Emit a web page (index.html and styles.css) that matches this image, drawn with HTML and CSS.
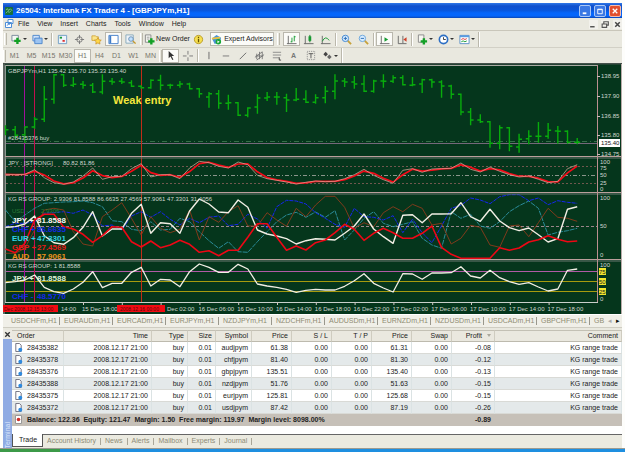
FILE: index.html
```html
<!DOCTYPE html>
<html lang="en">
<head>
<meta charset="utf-8">
<title>Interbank FX Trader 4</title>
<link rel="stylesheet" href="styles.css">
</head>
<body>
<div class="window">
  <header class="titlebar">
    <svg class="app-icon" viewBox="0 0 9 9"><rect width="9" height="9" rx="1" fill="#17703c"/><path d="M1 3l2-1 1 2 2-2 2 2M1 7l2-2 2 1 2-2" fill="none" stroke="#7fc494"/></svg>
    <h1>26504: Interbank FX Trader 4 - [GBPJPYm,H1]</h1>
    <div class="window-buttons">
      <button aria-label="Minimize"><svg viewBox="0 0 11 11"><path d="M3 8h4" stroke="#fff" stroke-width="2"/></svg></button>
      <button aria-label="Maximize"><svg viewBox="0 0 11 11"><path d="M3 3.5h5v5H3zM3 4h5" stroke="#fff" fill="none"/></svg></button>
      <button class="close" aria-label="Close"><svg viewBox="0 0 11 11"><path d="M3 3l5 5M8 3L3 8" stroke="#fff" stroke-width="1.4"/></svg></button>
    </div>
  </header>

  <nav class="menubar">
    <svg class="doc-icon" viewBox="0 0 10 10"><path d="M3 .5h5v4H3zM.5 3.5h6v5h-6z" fill="#fff" stroke="#4e8fd8"/><path d="M2 7l1-2 1 1 1-1" stroke="#4e8fd8" fill="none" stroke-width=".7"/></svg>
    <button>File</button><button>View</button><button>Insert</button><button>Charts</button><button>Tools</button><button>Window</button><button>Help</button>
    <div class="child-buttons">
      <button aria-label="Minimize chart"><svg viewBox="0 0 8 8"><path d="M1 6h4" stroke="#555" stroke-width="1.3"/></svg></button>
      <button aria-label="Restore chart"><svg viewBox="0 0 8 8"><path d="M2.500 3V1.500h4v3H5M1 3.500h4v3H1z" stroke="#555" fill="none"/></svg></button>
      <button aria-label="Close chart"><svg viewBox="0 0 8 8"><path d="M2 2l4 4M6 2L2 6" stroke="#444" stroke-width="1.3"/></svg></button>
    </div>
  </nav>

  <div class="toolbar main">
    <i class="grip"></i>
    <button class="drop" aria-label="New chart"><svg viewBox="0 0 12 12"><path d="M1 1.500h7v6H1z" fill="#f4f8f4" stroke="#789"/><path d="M7 4v7M3.500 7.500h7" stroke="#12a025" stroke-width="2.600"/></svg></button>
    <button class="drop" aria-label="Profiles"><svg viewBox="0 0 12 12"><path d="M1 1.500h7v6H1z" fill="#cfe2fa" stroke="#4a86cc"/><path d="M3 4.500h8v6H3z" fill="#9cc4f2" stroke="#4a86cc"/></svg></button>
    <i class="sep"></i>
    <button aria-label="Market Watch"><svg viewBox="0 0 12 12"><path d="M1.500 1.500h9v9h-9z" fill="#eef4fb" stroke="#6f9cc4"/><path d="M3 4h2.500" stroke="#1a9a35" stroke-width="2"/><path d="M6 7.500h2.500" stroke="#d33" stroke-width="2"/></svg></button>
    <button aria-label="Data Window"><svg viewBox="0 0 12 12"><circle cx="6" cy="6" r="3" fill="none" stroke="#777"/><path d="M6 1v4M6 7v4M1 6h4M7 6h4" stroke="#777"/></svg></button>
    <button aria-label="Navigator"><svg viewBox="0 0 12 12"><path d="M1 2h4l1 1h2v4H1z" fill="#fbe58a" stroke="#c99b2a" stroke-width=".8"/><path d="M7.500 4l1.200 2.300 2.500.4-1.800 1.800.4 2.500-2.300-1.200L5.200 11l.4-2.500-1.800-1.800 2.500-.4z" fill="#ffd84a" stroke="#c48a1a" stroke-width=".7"/></svg></button>
    <button class="pressed" aria-label="Terminal"><svg viewBox="0 0 12 12"><path d="M1 1.500h10v9H1z" fill="#fff" stroke="#3f7cc8"/><path d="M2.500 2v8" stroke="#3f7cc8" stroke-width="2"/></svg></button>
    <button aria-label="Strategy Tester"><svg viewBox="0 0 12 12"><path d="M1 1h8v9H1z" fill="#eef3f8" stroke="#8ab"/><circle cx="6.500" cy="5.500" r="2.500" fill="#bfe0ff" stroke="#6a8fb4"/><path d="M8.500 7.500l3 3" stroke="#c59a2c" stroke-width="1.500"/></svg></button>
    <i class="grip"></i>
    <button class="labelled"><svg viewBox="0 0 12 12"><path d="M1.500 1h6v8h-6z" fill="#f8f8f4" stroke="#888"/><path d="M3 3.500h3M3 5.500h3" stroke="#999"/><path d="M8 4.500v7M4.500 8h7" stroke="#12a025" stroke-width="2.600"/></svg>New Order</button>
    <button aria-label="Information"><svg viewBox="0 0 12 12"><circle cx="6" cy="6" r="4.500" fill="#f6df4e" stroke="#b99a25"/><path d="M6 3v1.500M6 5.500V9" stroke="#665200" stroke-width="1.400"/></svg></button>
    <button class="labelled pressed expert"><svg viewBox="0 0 12 12"><path d="M1 5l5-4 5 3-1 5-6 2z" fill="#4c93d6"/><path d="M1 5l9-1" stroke="#ecc43e" stroke-width="2"/><circle cx="8" cy="8.500" r="3" fill="#19a636"/><path d="M7 7l2.500 1.500L7 10z" fill="#fff"/></svg>Expert Advisors</button>
    <i class="grip wide"></i>
    <button class="pressed" aria-label="Bar chart"><svg viewBox="0 0 12 12"><path d="M2.500 2v8.500h9M1 10.500h2" stroke="#666" fill="none"/><path d="M6.500 4v5M5 8.500h1.500M9 2v6M9 3h1.500" stroke="#159a30" fill="none"/></svg></button>
    <button aria-label="Candlesticks"><svg viewBox="0 0 12 12"><path d="M2.500 2v8.500h9M1 10.500h2" stroke="#666" fill="none"/><path d="M7.500 1v8" stroke="#117022"/><path d="M6 2.500h3v5H6z" fill="#159a30"/></svg></button>
    <button aria-label="Line chart"><svg viewBox="0 0 12 12"><path d="M2.500 2v8.500h9M1 10.500h2" stroke="#666" fill="none"/><path d="M2.500 8Q6 1 10 7" stroke="#159a30" fill="none"/></svg></button>
    <i class="sep"></i>
    <button aria-label="Zoom in"><svg viewBox="0 0 12 12"><path d="M7 7l4 4" stroke="#c7a13a" stroke-width="2"/><circle cx="4.800" cy="4.800" r="3.500" fill="#d6ebff" stroke="#3f86cf"/><path d="M3 4.800h3.600M4.800 3v3.600" stroke="#276bb5"/></svg></button>
    <button aria-label="Zoom out"><svg viewBox="0 0 12 12"><path d="M7 7l4 4" stroke="#c7a13a" stroke-width="2"/><circle cx="4.800" cy="4.800" r="3.500" fill="#d6ebff" stroke="#6aa5dc"/><path d="M3 4.800h3.600" stroke="#276bb5"/></svg></button>
    <i class="sep"></i>
    <button class="pressed" aria-label="Auto scroll"><svg viewBox="0 0 12 12"><path d="M2.500 2v8.500h9M1 10.500h2" stroke="#666" fill="none"/><path d="M6 3.500l4 2.500-4 2.500z" fill="#159a30"/></svg></button>
    <button aria-label="Chart shift"><svg viewBox="0 0 12 12"><path d="M2.500 2v8.500h9M7.500 2v8" stroke="#666" fill="none"/><path d="M11.500 3.500v5L8 6z" fill="#d0402a"/></svg></button>
    <i class="sep"></i>
    <button class="drop" aria-label="Indicators"><svg viewBox="0 0 12 12"><path d="M1.500 1h6v8h-6z" fill="#f6f6f0" stroke="#888"/><path d="M7.500 4.500v7M4 8h7" stroke="#12a025" stroke-width="2.600"/></svg></button>
    <button class="drop" aria-label="Periods"><svg viewBox="0 0 12 12"><circle cx="6" cy="6" r="4.500" fill="#fff" stroke="#2d6fc4" stroke-width="1.800"/><path d="M6 3.500V6h2.500" stroke="#333" fill="none"/></svg></button>
    <button class="drop" aria-label="Templates"><svg viewBox="0 0 12 12"><path d="M1 1.500h10v9H1z" fill="#fff" stroke="#5a8fc8"/><path d="M1 2.500h10" stroke="#5a9be0" stroke-width="2"/><path d="M2.500 6l2-1 2 1 2-1" stroke="#d33" fill="none"/><path d="M2.500 8.500l2-1 2 1 2-1" stroke="#159a30" fill="none"/></svg></button>
    <i class="sep end"></i>
  </div>

  <div class="toolbar periods">
    <i class="grip"></i>
    <button>M1</button><button>M5</button><button>M15</button><button>M30</button><button class="pressed">H1</button><button>H4</button><button>D1</button><button>W1</button><button>MN</button>
    <i class="grip"></i>
    <button class="pressed" aria-label="Cursor"><svg viewBox="0 0 12 12"><path d="M4 1v8l2-2 2 4 1.200-.6-2-3.800H10z" fill="#333"/></svg></button>
    <button aria-label="Crosshair"><svg viewBox="0 0 12 12"><path d="M6.500 1v4M6.500 8v4M1 6.500h4M8 6.500h4" stroke="#777"/></svg></button>
    <i class="sep"></i>
    <button aria-label="Vertical line"><svg viewBox="0 0 12 12"><path d="M6.500 2v8" stroke="#666"/></svg></button>
    <button aria-label="Horizontal line"><svg viewBox="0 0 12 12"><path d="M3 6.500h7" stroke="#777"/></svg></button>
    <button aria-label="Trendline"><svg viewBox="0 0 12 12"><path d="M3 10l7-7" stroke="#666"/></svg></button>
    <button aria-label="Channel"><svg viewBox="0 0 12 12"><path d="M1 8l8-6M3 11l8-6M3 4v6M6 2v8M9 2v8M2 6.500h8" stroke="#777" fill="none"/></svg></button>
    <button aria-label="Fibonacci"><svg viewBox="0 0 12 12"><path d="M2 2.500h9M2 5.500h9M2 8.500h7" stroke="#888"/><path d="M9 8v3h2" stroke="#444" fill="none"/></svg></button>
    <button class="letter">A</button>
    <button aria-label="Text label"><svg viewBox="0 0 12 12"><path d="M2.500 1.500h8v9h-8z" fill="none" stroke="#888" stroke-dasharray="1 1"/><path d="M4 4h5M6.500 4v5" stroke="#555"/></svg></button>
    <button class="drop" aria-label="Arrows"><svg viewBox="0 0 12 12"><path d="M4 2l2.500 2.500L4 7 1.500 4.500z" fill="#444"/><path d="M8 5l2.500 2.500L8 10 5.500 7.500z" fill="#666"/></svg></button>
    <i class="sep end"></i>
  </div>

  <main class="chart"><svg id="chart" viewBox="3 63 619 251" role="img" aria-label="GBPJPYm H1 chart"></svg></main>

  <nav class="chart-tabs">
    <a href="#">USDCHFm,H1</a><a href="#">EURAUDm,H1</a><a href="#">EURCADm,H1</a><a href="#">EURJPYm,H1</a><a href="#">NZDJPYm,H1</a><a href="#">NZDCHFm,H1</a><a href="#">AUDUSDm,H1</a><a href="#">EURNZDm,H1</a><a href="#">NZDUSDm,H1</a><a href="#">USDCADm,H1</a><a href="#">GBPCHFm,H1</a><a href="#">GB</a>
    <span class="scrollers"><button class="off" aria-label="Scroll left">◂</button><button aria-label="Scroll right">▸</button></span>
  </nav>

  <section class="terminal">
    <aside class="side"><button aria-label="Close terminal"><svg viewBox="0 0 8 8"><path d="M2 2l4 4M6 2L2 6" stroke="#333" stroke-width="1.200"/></svg></button><span>Terminal</span></aside>
    <div class="panel">
      <table>
        <colgroup><col class="c-order"><col class="c-time"><col class="c-type"><col class="c-size"><col class="c-type"><col class="c-num"><col class="c-num"><col class="c-num"><col class="c-num"><col class="c-num"><col class="c-profit"><col></colgroup>
        <thead><tr><th>Order</th><th>Time</th><th>Type</th><th>Size</th><th>Symbol</th><th>Price</th><th>S / L</th><th>T / P</th><th>Price</th><th>Swap</th><th class="sorted">Profit</th><th>Comment</th></tr></thead>
        <tbody id="orders"></tbody>
        <tfoot><tr><td colspan="10"><svg viewBox="0 0 9 9"><path d="M1.500.5h6v8h-6z" fill="#fff" stroke="#999"/><circle cx="4.500" cy="4.500" r="1.800" fill="#d0302a"/></svg>Balance: 122.36&nbsp; Equity: 121.47&nbsp; Margin: 1.50&nbsp; Free margin: 119.97&nbsp; Margin level: 8098.00%</td><td>-0.89</td><td></td></tr></tfoot>
      </table>
      <nav class="terminal-tabs"><a class="active" href="#">Trade</a><a href="#">Account History</a><a href="#">News</a><a href="#">Alerts</a><a href="#">Mailbox</a><a href="#">Experts</a><a href="#">Journal</a></nav>
    </div>
  </section>
</div>
<div class="taskbar"><i></i></div>
<script src="script.js"></script>
</body>
</html>
```
FILE: styles.css
```css
* { box-sizing: border-box; }
body {
  margin: 0;
  padding-top: 3px;
  background: #fdfdfb;
  color: #222;
  font: 7px/10px "Liberation Sans", Arial, sans-serif;
}
button { margin: 0; padding: 0; border: 0; background: none; font: inherit; color: inherit; }
a { color: inherit; text-decoration: none; }
svg { display: block; }
.window { margin: 0 3px; background: #e9e8df; }

.titlebar {
  display: flex;
  align-items: center;
  height: 15px;
  padding: 0 1px 0 2px;
  background: linear-gradient(#2f78e8 0, #1050cc 3px, #0a55d8 7px, #0566fb 10px, #0566fb 13px, #0a46b4);
}
.app-icon { width: 8px; height: 8px; }
.titlebar h1 { margin: 0 0 0 3px; color: #fff; font: bold 8px/12px "Liberation Sans", Arial, sans-serif; white-space: nowrap; }
.window-buttons { display: flex; gap: 3px; margin-left: auto; }
.window-buttons button { width: 12px; height: 12px; border: 1px solid #a9c7f6; border-radius: 2px; background: #3a78e4; }
.window-buttons .close { background: #e2502e; border-color: #f3bcae; }

.menubar { display: flex; align-items: center; height: 13px; padding-left: 2px; border-bottom: 1px solid #c9c6ba; }
.doc-icon { width: 10px; height: 10px; margin-right: 3px; }
.menubar > button { margin-right: 8px; }
.child-buttons { display: flex; gap: 3px; margin-left: auto; }
.child-buttons button { width: 9px; height: 9px; background: #f2f1ec; }

.toolbar { display: flex; align-items: center; }
.toolbar button { flex: none; display: flex; align-items: center; justify-content: center; width: 17px; height: 14px; }
.toolbar svg { width: 11px; height: 11px; flex: none; }
.toolbar .drop { width: 21px; }
.toolbar .drop::after { content: ""; margin-left: 1px; border: 2px solid transparent; border-top-color: #333; border-bottom: 0; }
.toolbar .pressed { background: #fbfbf8; border: 1px solid #b9b7ad; }
.toolbar .labelled { width: 46px; gap: 1px; white-space: nowrap; }
.toolbar .expert { width: 64px; gap: 2px; margin-left: 3px; }
.toolbar .letter { font-weight: bold; color: #777; }
.grip { flex: none; width: 3px; height: 12px; margin: 0 1px; border-left: 1px solid #fff; border-right: 1px solid #bbb8ac; }
.grip.wide { margin: 0 3px; }
.sep { flex: none; width: 2px; height: 13px; margin: 0 1px; border-left: 1px solid #bbb8ac; border-right: 1px solid #fff; }
.toolbar .end { height: 15px; }
.main { height: 17px; border-bottom: 1px solid #d2d0c6; }
.periods { height: 15px; color: #77756c; }
.periods .grip { margin: 0; }

.chart { background: #05361c; }
.chart svg { width: 100%; height: auto; }
.chart text { font-family: "Liberation Sans", Arial, sans-serif; font-size: 6px; fill: #d0d6d0; }
.chart .note { font-size: 11px; font-weight: bold; fill: #f5e63c; }
.chart .rank { font-size: 8px; font-weight: bold; }
.chart .mark { font-size: 5px; fill: #5f0608; }

.chart-tabs { display: flex; align-items: center; height: 13px; padding-left: 8px; background: #f0efe8; border-top: 1px solid #fff; color: #8f8c72; overflow: hidden; }
.chart-tabs a { flex: 0 0 53px; white-space: nowrap; position: relative; }
.chart-tabs a:last-of-type { flex: 0 1 12px; }
.chart-tabs a + a::before { content: ""; position: absolute; left: -5px; top: 1px; height: 8px; border-left: 1px solid #99978c; }
.scrollers { display: flex; margin-left: auto; color: #111; }
.scrollers button { width: 8px; }
.scrollers .off { color: #aaa; }

.terminal { display: flex; padding-top: 2px; border-top: 1px solid #cfcdc2; }
.side { flex: 0 0 9px; display: flex; flex-direction: column; justify-content: space-between; background: #8fabe3; overflow: hidden; }
.side button { width: 9px; height: 9px; background: #eceae2; }
.side span { writing-mode: vertical-rl; transform: rotate(180deg); color: #dbe6fb; line-height: 9px; }
.panel { flex: 1; min-width: 0; background: #fff; }
table { width: 100%; table-layout: fixed; border-collapse: separate; border-spacing: 0; }
.c-order { width: 52px; }
.c-time { width: 88px; }
.c-type { width: 36px; }
.c-size { width: 28px; }
.c-num { width: 40px; }
.c-profit { width: 43px; }
th, td { height: 12px; padding: 0 3px 0 0; line-height: 10px; text-align: right; white-space: nowrap; font-weight: normal; border-right: 1px solid #dbe3e4; border-bottom: 1px solid #d9dad6; }
th { background: #eae8df; border-top: 1px solid #c3c0b4; border-bottom-color: #bdbaae; border-right-color: #cfccc0; }
th:first-child { text-align: left; padding-left: 5px; }
td:first-child { text-align: left; }
td svg { display: inline-block; width: 9px; height: 9px; margin: 0 4px 0 2px; vertical-align: -2px; }
tbody tr:nth-child(even) { background: #e4e9ea; }
.sorted::after { content: ""; display: inline-block; margin: 0 0 1px 5px; border: 2px solid transparent; border-top: 3px solid #aaa79b; border-bottom: 0; }
tfoot td { background: #c6c0b8; border-color: #c6c0b8; font-weight: bold; }

.terminal-tabs { display: flex; align-items: flex-start; height: 14px; margin-top: 8px; border-top: 1px solid #666; background: #ebeae0; color: #8d8a76; line-height: 12px; }
.terminal-tabs a { padding: 0 5px 0 4px; position: relative; }
.terminal-tabs a:not(.active)::after { content: ""; position: absolute; right: 0; top: 3px; height: 7px; border-right: 1px solid #a9a698; }
.terminal-tabs .active { margin-top: -1px; padding: 0 5px 0 6px; height: 13px; background: #fff; border: 1px solid #555; border-top: 0; color: #222; }
.taskbar { height: 4px; border-top: 1px solid #9c9a90; background: #1e8fe0; }
.taskbar i { display: block; width: 60px; height: 3px; background: #3c9a48; }
```
FILE: script.js
```js
const svg = document.getElementById('chart');
const NS = 'http://www.w3.org/2000/svg';
function add(tag, attrs, text) {
  const node = document.createElementNS(NS, tag);
  for (const key in attrs) node.setAttribute(key, attrs[key]);
  if (text) node.textContent = text;
  svg.appendChild(node);
}
const barX = i => 5.5 + 9.69 * i;
const line = (x1, y1, x2, y2, stroke, extra) => add('path', { d: `M${x1} ${y1}L${x2} ${y2}`, stroke, fill: 'none', ...extra });
const label = (x, y, text, extra) => add('text', { x, y, ...extra }, text);
// Series values are thirds of a unit below the given base.
const series = (base, values, stroke, extra) => add('polyline', {
  points: values.map((v, i) => `${barX(i).toFixed(1)},${(base + v / 3).toFixed(1)}`).join(' '),
  fill: 'none', stroke, 'stroke-linejoin': 'round', ...extra
});

add('rect', { x: 3, y: 63, width: 2, height: 251, fill: '#5c6660' });
add('rect', { x: 3, y: 63, width: 619, height: 1.5, fill: '#44504a' });
line(5, 65.5, 598, 65.5, '#a9a9a3');
line(5.5, 65, 5.5, 302, '#8c9890');
line(621.5, 64, 621.5, 314, '#b9aaa8');

const dash = { 'stroke-dasharray': '4 2 1 2' };
line(6, 141.5, 597, 141.5, '#356f48', { 'stroke-dasharray': '5 3 1 3' });
line(6, 143.5, 597, 143.5, '#75687a');
[166.5, 183.5].forEach(y => line(6, y, 597, y, '#70584e', { 'stroke-dasharray': '2 2' }));
line(6, 175.5, 597, 175.5, '#8a958b', dash);
line(6, 226.5, 597, 226.5, '#9a8589', { 'stroke-dasharray': '3 2' });
line(6, 271.5, 597, 271.5, '#b05aa5');
[281.5, 291.5].forEach(y => line(6, y, 597, y, '#a69a0e'));
line(24.5, 66, 24.5, 302, '#a1109a');
line(34.5, 66, 34.5, 302, '#c2104e');
line(141.5, 66, 141.5, 302, '#c22c18');

// high, low, open, close
const bars = [[190,220,203,203],[192,230,203,220],[213,243,218,195],[165,200,195,172],[72,180,172,112],[37,125,112,38],[37,75,38,70],[45,75,70,67],[57,80,67,70],[63,93,70,90],[37,97,90,58],[48,68,58,60],[48,66,58,60],[55,75,62,73],[70,80,73,77],[52,80,77,55],[38,85,55,70],[65,80,70,70],[57,77,70,66],[62,82,66,80],[78,107,80,95],[90,137,105,95],[84,140,95,124],[98,143,124,122],[120,162,122,160],[138,166,160,138],[97,155,135,108],[90,117,108,105],[90,128,105,105],[95,150,107,114],[78,118,114,112],[85,123,112,121],[97,125,121,107],[72,124,107,88],[37,112,88,57],[48,75,57,60],[42,80,60,66],[40,90,66,88],[53,92,88,57],[37,77,57,58],[40,63,58,47],[40,70,47,68],[45,73,70,68],[50,93,66,53],[50,77,53,60],[55,107,60,72],[68,110,72,97],[97,160,97,150],[138,190,150,174],[157,183,174,179],[178,257,179,244],[190,262,244,197],[195,268,197,253],[215,272,255,232],[205,247,230,223],[180,242,223,223],[183,230,223,205],[192,245,207,208],[205,245,208,241],[228,247,241,241]];
const d = bars.map(([h, l, o, c], i) => {
  const x = barX(i), y = v => (62 + v / 3).toFixed(1);
  return `M${x} ${y(h)}V${y(l)}M${x - (i ? 3 : 0)} ${y(o)}H${x}V${y(c)}H${x + 3}`;
}).join('');
add('path', { d, stroke: '#08ac0c', 'stroke-width': 1.4, fill: 'none' });

const strength = [337,338,337,323,347,362,367,360,342,318,352,344,343,320,305,345,338,338,350,318,298,302,313,318,300,308,340,350,355,360,366,361,357,359,358,350,338,322,340,353,364,325,320,331,321,320,319,303,322,330,315,328,338,345,342,352,362,358,320,308];
const smooth = strength.map((v, i) => i ? (v * 2 + strength[i - 1]) / 3 : v);
series(62, smooth, '#f40a18', { 'stroke-width': 1.7 });
series(62, strength, '#dfb0a2', { 'stroke-width': .7 });

series(190, [60,95,75,55,40,38,36,35,33,38,50,92,95,118,122,95,120,118,85,95,125,152,175,155,185,187,155,125,95,75,67,82,66,82,62,150,120,85,65,100,110,103,95,145,165,175,65,85,73,108,115,95,65,47,33,55,135,127,122,115], '#2f94a6', { 'stroke-width': .9, 'stroke-dasharray': '5 1' });
series(190, [110,100,100,95,70,68,65,70,60,75,108,105,120,78,65,82,65,88,105,85,98,82,78,107,103,73,87,115,50,31,33,42,68,85,103,112,55,80,82,90,77,128,88,128,158,108,55,46,24,30,41,20,14,14,32,24,44,32,37,40], '#1526ee', { 'stroke-dasharray': '4 1' });
series(190, [190,190,175,120,60,55,60,125,162,168,80,60,38,85,135,80,115,128,118,60,150,80,97,65,47,108,108,68,90,109,55,80,45,19,19,52,115,98,110,68,50,65,43,55,105,100,162,145,106,112,165,172,108,105,140,98,55,82,85,94], '#8c3b1c', { 'stroke-width': .9 });
series(190, [112,110,102,78,137,158,163,143,112,65,138,117,117,70,43,130,98,101,130,63,27,42,66,68,30,52,120,132,138,146,162,152,146,148,150,130,108,72,117,140,160,76,74,98,72,72,71,38,80,94,58,93,113,122,114,134,156,146,58,50], '#f1eee4', { 'stroke-width': 1.4 });
series(190, [177,188,160,90,73,73,110,117,133,157,137,110,112,155,171,153,173,165,151,163,187,182,197,181,181,142,101,101,142,181,168,180,158,150,128,103,118,151,130,115,128,145,145,130,108,172,193,205,205,205,205,173,181,174,156,149,137,148,155,153], '#ee0715', { 'stroke-width': 1.6 });
series(190, [278,275,270,255,292,305,310,297,277,245,293,280,280,247,232,288,268,270,290,245,222,232,247,247,223,237,282,288,292,298,307,301,298,300,300,289,272,251,280,294,306,251,252,268,249,249,248,230,258,264,241,263,275,283,278,291,303,297,241,237], '#f1eee4', { 'stroke-width': 1.3 });

// Panel dividers and axis
[156.5, 192.5, 259.5].forEach(y => {
  line(5, y, 621, y, '#bb9f9c');
  line(5, y + 1.5, 621, y + 1.5, '#6c7970');
});
line(5, 302.5, 598, 302.5, '#c9cfca');
line(597.5, 65, 597.5, 302, '#bb8f90');

label(8, 73, 'GBPJPYm,H1  135.42 135.70 135.33 135.40');
label(8, 140, '#28435376 buy');
label(113, 104, 'Weak entry', { class: 'note' });
label(8, 165, 'JPY :  [STRONG]');
label(63, 165, '80.82 81.86');
label(8, 201, 'KG RS GROUP:   2.9306 81.8588 86.6635 27.4569 57.9061 47.3301 31.4056');
[['JPY +', '81.8588', 223, '#f6f6f2'], ['CHF +', '86.6635', 232, '#1526ee'], ['EUR +', '47.3301', 241, '#35d4e6'], ['GBP +', '27.4569', 250, '#e81a18'], ['AUD', '57.9061', 259, '#ee911c'], ['JPY +', '81.8588', 281, '#dcf1d6'], ['CHF -', '48.5770', 299, '#1526ee']].forEach(([name, value, y, color]) => {
  label(12, y, name, { class: 'rank', style: `fill:${color}` });
  label(37, y, value, { class: 'rank', style: `fill:${color}` });
});
label(12, 213, 'USD  -', { style: 'fill:#2b7b39' });
label(41, 213, '2.9306', { style: 'fill:#2b7b39' });
label(8, 268, 'KG RS GROUP:  1 81.8588');

[['138.95', 76], ['137.90', 96], ['136.85', 116], ['135.80', 135], ['134.75', 154]].forEach(([t, y]) => {
  line(597, y + .5, 600, y + .5, '#cbb');
  label(601, y + 2, t);
});
add('rect', { x: 599, y: 139, width: 21, height: 8, fill: '#fff' });
label(601, 145, '135.40', { style: 'fill:#111' });
[['100', 164], ['75', 170], ['50', 177], ['25', 185], ['0', 191], ['100', 200], ['50', 228], ['0', 257], ['100', 267], ['0', 301]].forEach(([t, y]) => label(600, y, t));
[['75', 271], ['50', 281], ['25', 291]].forEach(([t, y]) => {
  add('rect', { x: 599, y: y - 3, width: 7, height: 7, fill: '#f0e62c' });
  label(599, y + 3, t, { style: 'fill:#222' });
});

['15 Dec 18:00', null, '', '16 Dec 06:00', '16 Dec 10:00', '16 Dec 14:00', '16 Dec 18:00', '16 Dec 22:00', '17 Dec 02:00', '17 Dec 06:00', '17 Dec 10:00', '17 Dec 14:00', '17 Dec 18:00'].forEach((t, i) => {
  const x = 82 + 38.8 * i;
  line(x + 1.5, 302, x + 1.5, 305, '#cfc8c4');
  if (t) label(x, 310.5, t);
});
label(61, 310.5, '14:00');
label(167, 310.5, 'Dec 02:00');
add('rect', { x: 3, y: 305, width: 55, height: 7, fill: '#f00b12' });
label(4, 310.5, 'Dec 2008.12.15 13:00', { class: 'mark' });
add('rect', { x: 117, y: 305, width: 48, height: 7, fill: '#f00b12' });
label(120, 310.5, '2008.12.16 00:00', { class: 'mark' });

const orders = [
  ['28435382', 'audjpym', '61.38', '61.31', '-0.08'],
  ['28435378', 'chfjpym', '81.40', '81.30', '-0.12'],
  ['28435376', 'gbpjpym', '135.51', '135.40', '-0.13'],
  ['28435388', 'nzdjpym', '51.76', '51.63', '-0.15'],
  ['28435375', 'eurjpym', '125.81', '125.68', '-0.15'],
  ['28435372', 'usdjpym', '87.42', '87.19', '-0.26']
];
const icon = '<svg viewBox="0 0 9 10"><path d="M1.500.5h4l2 2v7h-6z" fill="#fff" stroke="#667"/><circle cx="6.500" cy="7.500" r="2.200" fill="#2f8be0"/></svg>';
document.getElementById('orders').innerHTML = orders.map(([id, symbol, open, now, profit]) =>
  `<tr>${[icon + id, '2008.12.17 21:00', 'buy', '0.01', symbol, open, '0.00', '0.00', now, '0.00', profit, 'KG range trade'].map(v => `<td>${v}</td>`).join('')}</tr>`).join('');
```
